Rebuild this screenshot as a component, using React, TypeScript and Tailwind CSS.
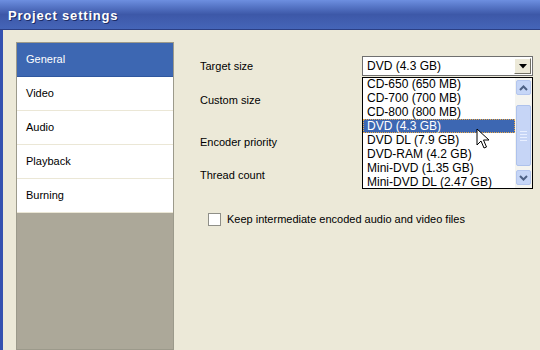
import React from 'react';

const sections = ['General', 'Video', 'Audio', 'Playback', 'Burning'];

const sizes = [
  'CD-650 (650 MB)',
  'CD-700 (700 MB)',
  'CD-800 (800 MB)',
  'DVD (4.3 GB)',
  'DVD DL (7.9 GB)',
  'DVD-RAM (4.2 GB)',
  'Mini-DVD (1.35 GB)',
  'Mini-DVD DL (2.47 GB)',
];

const ui = { fontFamily: '"Liberation Sans", Arial, sans-serif' };

function Chevron({ down }: { down?: boolean }) {
  return (
    <svg width="9" height="6" viewBox="0 0 9 6">
      <path
        d={down ? 'M1 1 L4.5 4.5 L8 1' : 'M1 5 L4.5 1.5 L8 5'}
        fill="none"
        stroke="#4d6185"
        strokeWidth="2"
      />
    </svg>
  );
}

function Cursor() {
  return (
    <svg width="14" height="22" viewBox="0 0 14 22" className="absolute left-[113px] top-[50px]">
      <path
        d="M1 1 L1 17 L5 13 L8 20 L10.5 19 L7.5 12 L13 12 Z"
        fill="#fff"
        stroke="#000"
        strokeWidth="1"
        strokeLinejoin="round"
      />
    </svg>
  );
}

export default function App() {
  return (
    <div className="w-[540px] h-[350px] overflow-hidden flex flex-col bg-[#ece9d8]" style={ui}>
      {/* Title bar */}
      <div className="h-[30px] shrink-0 flex items-center pl-[8px] bg-gradient-to-b from-[#6d8fe0] via-[#3d58a8] to-[#4565b8] border-b border-[#2b3f85]">
        <span
          className="text-white font-bold text-[13px] tracking-[0.8px] mt-[2px]"
          style={{ textShadow: '1px 1px 0 #1c2c66' }}
        >
          Project settings
        </span>
      </div>

      <div className="flex-1 flex border-l-[3px] border-[#3552b0]">
        {/* Section list */}
        <div className="ml-[13px] mt-[12px] w-[158px] flex flex-col border border-[#9c9a8b] bg-[#aca899]">
          {sections.map((s, i) => (
            <div
              key={s}
              className={
                i === 0
                  ? 'h-[34px] flex items-center pl-[9px] text-[11px] text-white bg-[#3d67b2] border-b border-[#2f579f]'
                  : 'h-[34px] flex items-center pl-[9px] text-[11px] text-black bg-white border-b border-[#ebe7d6]'
              }
            >
              {s}
            </div>
          ))}
        </div>

        {/* Settings */}
        <div className="flex flex-col pl-[26px] pt-[26px] text-[11px] text-black">
          <div className="h-[20px] flex items-center">
            <span className="w-[162px]">Target size</span>
            <div className="relative w-[171px] h-[20px]">
              <div className="w-full h-full flex items-center bg-white border border-[#6f6f6f] pl-[4px] text-[12px]">
                <span className="flex-1">DVD (4.3 GB)</span>
                <div className="w-[17px] h-[16px] mr-[1px] flex items-center justify-center bg-[#ece9d8] border border-t-white border-l-white border-r-[#716f64] border-b-[#716f64]">
                  <svg width="8" height="5" viewBox="0 0 8 5">
                    <path d="M0 0 H8 L4 4.5 Z" fill="#000" />
                  </svg>
                </div>
              </div>

              {/* Dropdown list */}
              <div className="absolute left-0 top-[21px] w-[171px] h-[112px] bg-white border border-black flex overflow-hidden text-[12px]">
                <div className="flex-1 flex flex-col -mt-[1px]">
                  {sizes.map((s) => (
                    <div
                      key={s}
                      className={
                        s === 'DVD (4.3 GB)'
                          ? 'h-[14px] shrink-0 flex items-center pl-[4px] bg-[#3d67b2] text-white outline outline-1 outline-dotted outline-[#e8a848] -outline-offset-1'
                          : 'h-[14px] shrink-0 flex items-center pl-[4px]'
                      }
                    >
                      {s}
                    </div>
                  ))}
                </div>
                <div className="w-[17px] flex flex-col items-center py-[2px] bg-[#f4f4f0]">
                  <div className="w-[15px] h-[15px] flex items-center justify-center rounded-[2px] bg-[#c6d6f7] border border-[#b4c6ee]">
                    <Chevron />
                  </div>
                  <div className="w-[15px] h-[61px] mt-[10px] flex flex-col items-center justify-center gap-[2px] rounded-[2px] bg-[#c6d5f6] border border-[#aec2ec]">
                    <div className="w-[7px] h-px bg-[#e8efff]" />
                    <div className="w-[7px] h-px bg-[#e8efff]" />
                    <div className="w-[7px] h-px bg-[#e8efff]" />
                    <div className="w-[7px] h-px bg-[#e8efff]" />
                  </div>
                  <div className="w-[15px] h-[15px] mt-[4px] flex items-center justify-center rounded-[2px] bg-[#c6d6f7] border border-[#b4c6ee]">
                    <Chevron down />
                  </div>
                </div>
                <Cursor />
              </div>
            </div>
          </div>

          <div className="h-[20px] mt-[14px] flex items-center">Custom size</div>
          <div className="h-[20px] mt-[22px] flex items-center">Encoder priority</div>
          <div className="h-[20px] mt-[13px] flex items-center">Thread count</div>

          <label className="h-[20px] mt-[24px] pl-[8px] flex items-center gap-[6px]">
            <span className="w-[13px] h-[13px] bg-white border border-[#8f8f88]" />
            <span>Keep intermediate encoded audio and video files</span>
          </label>
        </div>
      </div>
    </div>
  );
}
